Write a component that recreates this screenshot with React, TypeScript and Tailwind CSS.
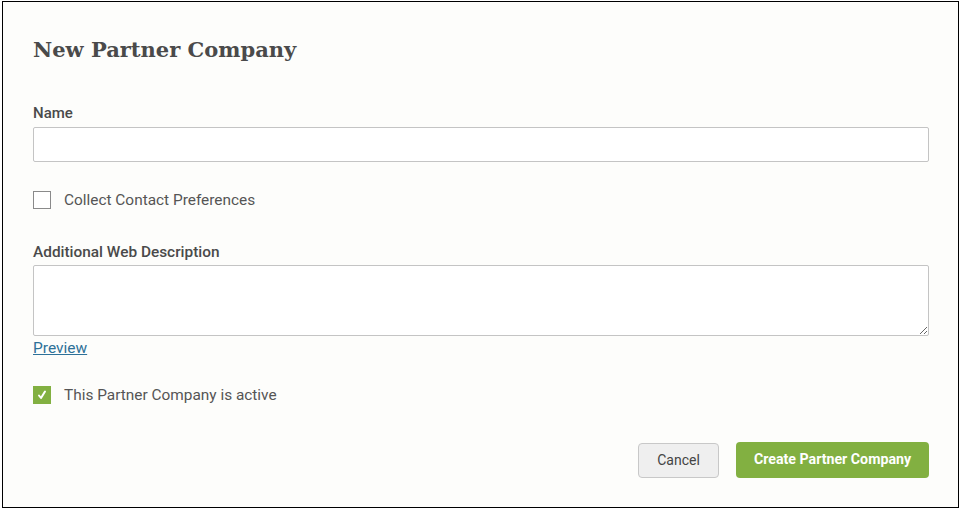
export default function App() {
  return (
    <div className="min-h-screen bg-white pl-[2px] pt-[1px]">
      <div
        className="h-[507px] w-[957px] border border-black bg-[#fdfdfb] px-[30px] pt-[33px] text-[#4a4a4a]"
        style={{ fontFamily: "Roboto, 'Liberation Sans', sans-serif" }}
      >
        <h1
          className="text-[21px] font-bold leading-[30px] text-[#4a4a4a]"
          style={{ fontFamily: "'Roboto Slab', 'DejaVu Serif', serif" }}
        >
          New Partner Company
        </h1>

        <label className="mt-[39px] block text-[15px] font-medium leading-[18px] text-[#4a4a4a]">Name</label>
        <input
          type="text"
          className="mt-[5px] block h-[35px] w-[896px] rounded-[2px] border border-[#c4c4c4] bg-white px-2 text-[14px] outline-none"
        />

        <div className="mt-[29px] flex items-center gap-[13px]">
          <span className="h-[18px] w-[18px] border border-[#8a8a8a] bg-white" />
          <span className="text-[15.4px] leading-[18px] text-[#555]">Collect Contact Preferences</span>
        </div>

        <label className="mt-[34px] block text-[15.4px] font-medium leading-[18px] text-[#4a4a4a]">
          Additional Web Description
        </label>
        <textarea className="mt-[4px] block h-[71px] w-[896px] rounded-[2px] border border-[#c4c4c4] bg-white px-2 text-[14px] outline-none" />
        <a href="#" className="mt-[2px] inline-block text-[15.5px] leading-[18px] text-[#2e7198] underline">
          Preview
        </a>

        <div className="mt-[26px] flex items-center gap-[13px]">
          <span className="flex h-[18px] w-[18px] items-center justify-center bg-[#82b041]">
            <svg width="12" height="12" viewBox="0 0 12 12" fill="none">
              <path d="M3 6.5 L5 9 L9 2.5" stroke="white" strokeWidth="2" strokeLinecap="round" strokeLinejoin="round" />
            </svg>
          </span>
          <span className="text-[15.4px] leading-[18px] text-[#555]">This Partner Company is active</span>
        </div>

        <div className="mt-[38px] flex w-[896px] items-start justify-end gap-[17px]">
          <button className="mt-[1px] h-[35px] w-[81px] rounded-[4px] border border-[#c8c8c8] bg-[#efefef] text-[14px] text-[#444]">
            Cancel
          </button>
          <button className="h-[36px] w-[193px] rounded-[4px] bg-[#82b041] text-[14.2px] font-bold text-white">
            Create Partner Company
          </button>
        </div>
      </div>
    </div>
  );
}
